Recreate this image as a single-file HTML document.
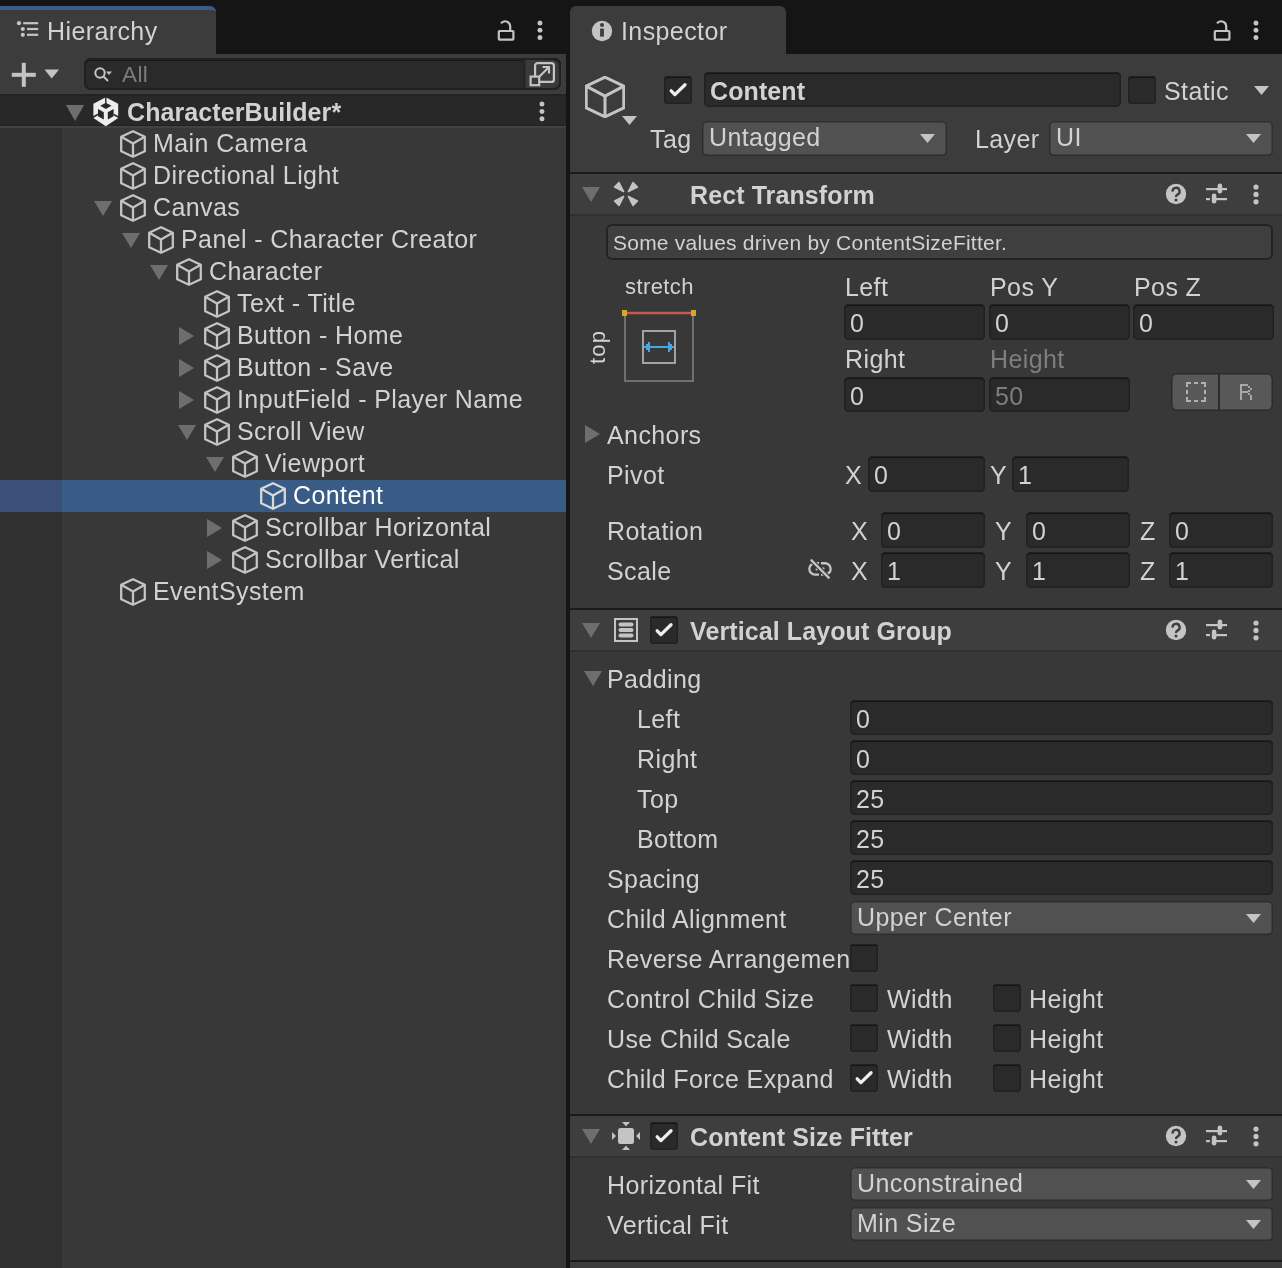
<!DOCTYPE html>
<html><head><meta charset="utf-8"><style>
html,body{margin:0;padding:0;width:1282px;height:1268px;overflow:hidden;background:#151515;}
.a{position:absolute;display:block;}
.t{position:absolute;white-space:nowrap;will-change:transform;font-family:"Liberation Sans",sans-serif;}
</style></head><body>
<div class="a" style="left:0px;top:0px;width:1282px;height:1268px;background:#151515;"></div>
<div class="a" style="left:0px;top:54px;width:566px;height:1214px;background:#383838;"></div>
<div class="a" style="left:0px;top:10px;width:216px;height:44px;background:#3c3c3c;border-top-right-radius:6px;"></div>
<div class="a" style="left:0px;top:6px;width:216px;height:6px;background:#3a5d87;border-top-right-radius:6px;"></div>
<div class="a" style="left:0px;top:10px;width:216px;height:44px;background:#3c3c3c;border-top-right-radius:4px;"></div>
<div class="a" style="left:0px;top:54px;width:566px;height:40px;background:#3c3c3c;"></div>
<div class="a" style="left:570px;top:54px;width:712px;height:1214px;background:#383838;"></div>
<div class="a" style="left:570px;top:6px;width:216px;height:48px;background:#3c3c3c;border-top-left-radius:6px;border-top-right-radius:6px;"></div>
<svg class="a" style="left:16px;top:20px;" width="24" height="20" viewBox="0 0 24 20"><g fill="#c4c4c4"><circle cx="3" cy="3.2" r="2.1"/><circle cx="6.8" cy="9" r="2.1"/><circle cx="6.8" cy="14.8" r="2.1"/><rect x="7.2" y="2.1" width="15" height="2.2"/><rect x="11" y="7.9" width="11.2" height="2.2"/><rect x="11" y="13.7" width="11.2" height="2.2"/></g></svg>
<div class="t" style="left:46.70px;top:19.14px;font-size:25px;line-height:25px;color:#d2d2d2;letter-spacing:0.4px;">Hierarchy</div>
<svg class="a" style="left:497px;top:19px;" width="18" height="22" viewBox="0 0 18 22"><g fill="none" stroke="#c4c4c4" stroke-width="2.2"><rect x="1.8" y="12" width="14.6" height="8.6" rx="0.8"/><path d="M4 4.4 A5.1 5.1 0 0 1 13.2 6.8 V12"/></g></svg>
<svg class="a" style="left:536px;top:18.7px;" width="8" height="22.6" viewBox="0 0 8 22.6"><circle cx="4" cy="4.0" r="2.5" fill="#c4c4c4"/><circle cx="4" cy="11.3" r="2.5" fill="#c4c4c4"/><circle cx="4" cy="18.6" r="2.5" fill="#c4c4c4"/></svg>
<svg class="a" style="left:1213px;top:19px;" width="18" height="22" viewBox="0 0 18 22"><g fill="none" stroke="#c4c4c4" stroke-width="2.2"><rect x="1.8" y="12" width="14.6" height="8.6" rx="0.8"/><path d="M4 4.4 A5.1 5.1 0 0 1 13.2 6.8 V12"/></g></svg>
<svg class="a" style="left:1252px;top:18.7px;" width="8" height="22.6" viewBox="0 0 8 22.6"><circle cx="4" cy="4.0" r="2.5" fill="#c4c4c4"/><circle cx="4" cy="11.3" r="2.5" fill="#c4c4c4"/><circle cx="4" cy="18.6" r="2.5" fill="#c4c4c4"/></svg>
<svg class="a" style="left:10px;top:62px;" width="26" height="26" viewBox="0 0 26 26"><g fill="#c4c4c4"><rect x="1.8" y="10.8" width="24" height="4"/><rect x="11.8" y="0.8" width="4" height="24"/></g></svg>
<svg class="a" style="left:44px;top:69px;" width="16" height="10" viewBox="0 0 16 10"><polygon points="0.5,0.5 15,0.5 7.7,9.5" fill="#c4c4c4"/></svg>
<div class="a" style="left:84px;top:58px;width:477px;height:32px;background:#2a2a2a;border-radius:7px;box-shadow:inset 0 0 0 2px #212121, inset 0 2.5px 0 0 #080808;box-sizing:border-box;"></div>
<div class="a" style="left:523px;top:60px;width:36px;height:28px;background:#3a3a3a;border-top-right-radius:6px;border-bottom-right-radius:6px;box-shadow:inset 2.5px 0 0 #262626;"></div>
<svg class="a" style="left:93px;top:66px;" width="24" height="18" viewBox="0 0 24 18"><g fill="none" stroke="#c4c4c4" stroke-width="2"><circle cx="7" cy="7" r="4.7"/><line x1="10.5" y1="10.5" x2="15" y2="15"/></g><polygon points="13,5.5 19,5.5 16,9" fill="#c4c4c4"/></svg>
<div class="t" style="left:121.70px;top:63.75px;font-size:22.5px;line-height:22.5px;color:#7c7c7c;letter-spacing:0.4px;">All</div>
<svg class="a" style="left:529px;top:61px;" width="32" height="28" viewBox="0 0 32 28"><g fill="none" stroke="#c4c4c4" stroke-width="2.2"><rect x="6.1" y="2.1" width="18.8" height="18.8" rx="2.5"/><path d="M9.5 16.5 L20 6 M13.5 6 H20 V12.5"/></g><rect x="1.6" y="15.6" width="8.6" height="8.6" fill="#3a3a3a" stroke="#c4c4c4" stroke-width="2.2"/></svg>
<div class="a" style="left:0px;top:94px;width:566px;height:2px;background:#232323;"></div>
<div class="a" style="left:0px;top:96px;width:566px;height:29px;background:#282828;"></div>
<div class="a" style="left:0px;top:125px;width:566px;height:1px;background:#232323;"></div>
<div class="a" style="left:0px;top:126px;width:566px;height:2px;background:#424242;"></div>
<svg class="a" style="left:66px;top:105px;" width="18" height="16" viewBox="0 0 18 16"><polygon points="0,0 18,0 9.0,16" fill="#6e6e6e"/></svg>
<svg class="a" style="left:90px;top:95px;" width="32" height="34" viewBox="0 0 32 34"><polygon points="15.8,2.3 28.2,8.7 28.2,23 15.8,31.3 3.4,23 3.4,8.7" fill="#eeeeee"/><g fill="#272727"><polygon points="15.1,1.5 16.5,1.5 16.5,8.4 15.1,8.4"/><polygon points="10.2,10.8 15.8,7.7 21.5,10.8 15.8,13.9"/><polygon points="8,13.9 13.8,17.2 13.8,24.6 8,21.2"/><polygon points="23.6,13.9 17.8,17.2 17.8,24.6 23.6,21.2"/><polygon points="2.5,21.6 8,18.5 8,20.3 2.5,23.4"/><polygon points="29.1,21.6 23.6,18.5 23.6,20.3 29.1,23.4"/></g></svg>
<div class="t" style="left:126.70px;top:99.64px;font-size:25px;line-height:25px;color:#d2d2d2;font-weight:bold;letter-spacing:0.1px;">CharacterBuilder*</div>
<svg class="a" style="left:538px;top:99.6px;" width="8" height="22.8" viewBox="0 0 8 22.8"><circle cx="4" cy="4.0" r="2.5" fill="#c4c4c4"/><circle cx="4" cy="11.4" r="2.5" fill="#c4c4c4"/><circle cx="4" cy="18.8" r="2.5" fill="#c4c4c4"/></svg>
<div class="a" style="left:0px;top:128px;width:62px;height:1140px;background:#303030;"></div>
<svg class="a" style="left:120px;top:130.4px;" width="26" height="28" viewBox="0 0 26 28"><g fill="none" stroke="#c4c4c4" stroke-width="2.3" stroke-linejoin="round"><polygon points="13.0,1.2 24.8,6.72 24.8,21.28 13.0,26.8 1.2,21.28 1.2,6.72"/><polyline points="1.2,6.72 13.0,13.44 24.8,6.72"/><line x1="13.0" y1="13.44" x2="13.0" y2="26.8"/></g></svg>
<div class="t" style="left:152.70px;top:131.04px;font-size:25px;line-height:25px;color:#d2d2d2;letter-spacing:0.4px;">Main Camera</div>
<svg class="a" style="left:120px;top:162.4px;" width="26" height="28" viewBox="0 0 26 28"><g fill="none" stroke="#c4c4c4" stroke-width="2.3" stroke-linejoin="round"><polygon points="13.0,1.2 24.8,6.72 24.8,21.28 13.0,26.8 1.2,21.28 1.2,6.72"/><polyline points="1.2,6.72 13.0,13.44 24.8,6.72"/><line x1="13.0" y1="13.44" x2="13.0" y2="26.8"/></g></svg>
<div class="t" style="left:152.70px;top:163.04px;font-size:25px;line-height:25px;color:#d2d2d2;letter-spacing:0.4px;">Directional Light</div>
<svg class="a" style="left:94px;top:201px;" width="18" height="15" viewBox="0 0 18 15"><polygon points="0,0 18,0 9.0,15" fill="#6e6e6e"/></svg>
<svg class="a" style="left:120px;top:194.4px;" width="26" height="28" viewBox="0 0 26 28"><g fill="none" stroke="#c4c4c4" stroke-width="2.3" stroke-linejoin="round"><polygon points="13.0,1.2 24.8,6.72 24.8,21.28 13.0,26.8 1.2,21.28 1.2,6.72"/><polyline points="1.2,6.72 13.0,13.44 24.8,6.72"/><line x1="13.0" y1="13.44" x2="13.0" y2="26.8"/></g></svg>
<div class="t" style="left:152.70px;top:195.04px;font-size:25px;line-height:25px;color:#d2d2d2;letter-spacing:0.4px;">Canvas</div>
<svg class="a" style="left:122px;top:233px;" width="18" height="15" viewBox="0 0 18 15"><polygon points="0,0 18,0 9.0,15" fill="#6e6e6e"/></svg>
<svg class="a" style="left:148px;top:226.4px;" width="26" height="28" viewBox="0 0 26 28"><g fill="none" stroke="#c4c4c4" stroke-width="2.3" stroke-linejoin="round"><polygon points="13.0,1.2 24.8,6.72 24.8,21.28 13.0,26.8 1.2,21.28 1.2,6.72"/><polyline points="1.2,6.72 13.0,13.44 24.8,6.72"/><line x1="13.0" y1="13.44" x2="13.0" y2="26.8"/></g></svg>
<div class="t" style="left:180.70px;top:227.04px;font-size:25px;line-height:25px;color:#d2d2d2;letter-spacing:0.4px;">Panel - Character Creator</div>
<svg class="a" style="left:150px;top:265px;" width="18" height="15" viewBox="0 0 18 15"><polygon points="0,0 18,0 9.0,15" fill="#6e6e6e"/></svg>
<svg class="a" style="left:176px;top:258.4px;" width="26" height="28" viewBox="0 0 26 28"><g fill="none" stroke="#c4c4c4" stroke-width="2.3" stroke-linejoin="round"><polygon points="13.0,1.2 24.8,6.72 24.8,21.28 13.0,26.8 1.2,21.28 1.2,6.72"/><polyline points="1.2,6.72 13.0,13.44 24.8,6.72"/><line x1="13.0" y1="13.44" x2="13.0" y2="26.8"/></g></svg>
<div class="t" style="left:208.70px;top:259.04px;font-size:25px;line-height:25px;color:#d2d2d2;letter-spacing:0.4px;">Character</div>
<svg class="a" style="left:204px;top:290.4px;" width="26" height="28" viewBox="0 0 26 28"><g fill="none" stroke="#c4c4c4" stroke-width="2.3" stroke-linejoin="round"><polygon points="13.0,1.2 24.8,6.72 24.8,21.28 13.0,26.8 1.2,21.28 1.2,6.72"/><polyline points="1.2,6.72 13.0,13.44 24.8,6.72"/><line x1="13.0" y1="13.44" x2="13.0" y2="26.8"/></g></svg>
<div class="t" style="left:236.70px;top:291.04px;font-size:25px;line-height:25px;color:#d2d2d2;letter-spacing:0.4px;">Text - Title</div>
<svg class="a" style="left:179px;top:327px;" width="15" height="18" viewBox="0 0 15 18"><polygon points="0,0 15,9.0 0,18" fill="#6e6e6e"/></svg>
<svg class="a" style="left:204px;top:322.4px;" width="26" height="28" viewBox="0 0 26 28"><g fill="none" stroke="#c4c4c4" stroke-width="2.3" stroke-linejoin="round"><polygon points="13.0,1.2 24.8,6.72 24.8,21.28 13.0,26.8 1.2,21.28 1.2,6.72"/><polyline points="1.2,6.72 13.0,13.44 24.8,6.72"/><line x1="13.0" y1="13.44" x2="13.0" y2="26.8"/></g></svg>
<div class="t" style="left:236.70px;top:323.04px;font-size:25px;line-height:25px;color:#d2d2d2;letter-spacing:0.4px;">Button - Home</div>
<svg class="a" style="left:179px;top:359px;" width="15" height="18" viewBox="0 0 15 18"><polygon points="0,0 15,9.0 0,18" fill="#6e6e6e"/></svg>
<svg class="a" style="left:204px;top:354.4px;" width="26" height="28" viewBox="0 0 26 28"><g fill="none" stroke="#c4c4c4" stroke-width="2.3" stroke-linejoin="round"><polygon points="13.0,1.2 24.8,6.72 24.8,21.28 13.0,26.8 1.2,21.28 1.2,6.72"/><polyline points="1.2,6.72 13.0,13.44 24.8,6.72"/><line x1="13.0" y1="13.44" x2="13.0" y2="26.8"/></g></svg>
<div class="t" style="left:236.70px;top:355.04px;font-size:25px;line-height:25px;color:#d2d2d2;letter-spacing:0.4px;">Button - Save</div>
<svg class="a" style="left:179px;top:391px;" width="15" height="18" viewBox="0 0 15 18"><polygon points="0,0 15,9.0 0,18" fill="#6e6e6e"/></svg>
<svg class="a" style="left:204px;top:386.4px;" width="26" height="28" viewBox="0 0 26 28"><g fill="none" stroke="#c4c4c4" stroke-width="2.3" stroke-linejoin="round"><polygon points="13.0,1.2 24.8,6.72 24.8,21.28 13.0,26.8 1.2,21.28 1.2,6.72"/><polyline points="1.2,6.72 13.0,13.44 24.8,6.72"/><line x1="13.0" y1="13.44" x2="13.0" y2="26.8"/></g></svg>
<div class="t" style="left:236.70px;top:387.04px;font-size:25px;line-height:25px;color:#d2d2d2;letter-spacing:0.4px;">InputField - Player Name</div>
<svg class="a" style="left:178px;top:425px;" width="18" height="15" viewBox="0 0 18 15"><polygon points="0,0 18,0 9.0,15" fill="#6e6e6e"/></svg>
<svg class="a" style="left:204px;top:418.4px;" width="26" height="28" viewBox="0 0 26 28"><g fill="none" stroke="#c4c4c4" stroke-width="2.3" stroke-linejoin="round"><polygon points="13.0,1.2 24.8,6.72 24.8,21.28 13.0,26.8 1.2,21.28 1.2,6.72"/><polyline points="1.2,6.72 13.0,13.44 24.8,6.72"/><line x1="13.0" y1="13.44" x2="13.0" y2="26.8"/></g></svg>
<div class="t" style="left:236.70px;top:419.04px;font-size:25px;line-height:25px;color:#d2d2d2;letter-spacing:0.4px;">Scroll View</div>
<svg class="a" style="left:206px;top:457px;" width="18" height="15" viewBox="0 0 18 15"><polygon points="0,0 18,0 9.0,15" fill="#6e6e6e"/></svg>
<svg class="a" style="left:232px;top:450.4px;" width="26" height="28" viewBox="0 0 26 28"><g fill="none" stroke="#c4c4c4" stroke-width="2.3" stroke-linejoin="round"><polygon points="13.0,1.2 24.8,6.72 24.8,21.28 13.0,26.8 1.2,21.28 1.2,6.72"/><polyline points="1.2,6.72 13.0,13.44 24.8,6.72"/><line x1="13.0" y1="13.44" x2="13.0" y2="26.8"/></g></svg>
<div class="t" style="left:264.70px;top:451.04px;font-size:25px;line-height:25px;color:#d2d2d2;letter-spacing:0.4px;">Viewport</div>
<div class="a" style="left:62px;top:480px;width:504px;height:32px;background:#385c85;"></div>
<div class="a" style="left:0px;top:480px;width:62px;height:32px;background:#3b4f79;"></div>
<svg class="a" style="left:260px;top:482.4px;" width="26" height="28" viewBox="0 0 26 28"><g fill="none" stroke="#d8d8d8" stroke-width="2.3" stroke-linejoin="round"><polygon points="13.0,1.2 24.8,6.72 24.8,21.28 13.0,26.8 1.2,21.28 1.2,6.72"/><polyline points="1.2,6.72 13.0,13.44 24.8,6.72"/><line x1="13.0" y1="13.44" x2="13.0" y2="26.8"/></g></svg>
<div class="t" style="left:292.70px;top:483.04px;font-size:25px;line-height:25px;color:#ffffff;letter-spacing:0.4px;">Content</div>
<svg class="a" style="left:207px;top:519px;" width="15" height="18" viewBox="0 0 15 18"><polygon points="0,0 15,9.0 0,18" fill="#6e6e6e"/></svg>
<svg class="a" style="left:232px;top:514.4px;" width="26" height="28" viewBox="0 0 26 28"><g fill="none" stroke="#c4c4c4" stroke-width="2.3" stroke-linejoin="round"><polygon points="13.0,1.2 24.8,6.72 24.8,21.28 13.0,26.8 1.2,21.28 1.2,6.72"/><polyline points="1.2,6.72 13.0,13.44 24.8,6.72"/><line x1="13.0" y1="13.44" x2="13.0" y2="26.8"/></g></svg>
<div class="t" style="left:264.70px;top:515.04px;font-size:25px;line-height:25px;color:#d2d2d2;letter-spacing:0.4px;">Scrollbar Horizontal</div>
<svg class="a" style="left:207px;top:551px;" width="15" height="18" viewBox="0 0 15 18"><polygon points="0,0 15,9.0 0,18" fill="#6e6e6e"/></svg>
<svg class="a" style="left:232px;top:546.4px;" width="26" height="28" viewBox="0 0 26 28"><g fill="none" stroke="#c4c4c4" stroke-width="2.3" stroke-linejoin="round"><polygon points="13.0,1.2 24.8,6.72 24.8,21.28 13.0,26.8 1.2,21.28 1.2,6.72"/><polyline points="1.2,6.72 13.0,13.44 24.8,6.72"/><line x1="13.0" y1="13.44" x2="13.0" y2="26.8"/></g></svg>
<div class="t" style="left:264.70px;top:547.04px;font-size:25px;line-height:25px;color:#d2d2d2;letter-spacing:0.4px;">Scrollbar Vertical</div>
<svg class="a" style="left:120px;top:578.4px;" width="26" height="28" viewBox="0 0 26 28"><g fill="none" stroke="#c4c4c4" stroke-width="2.3" stroke-linejoin="round"><polygon points="13.0,1.2 24.8,6.72 24.8,21.28 13.0,26.8 1.2,21.28 1.2,6.72"/><polyline points="1.2,6.72 13.0,13.44 24.8,6.72"/><line x1="13.0" y1="13.44" x2="13.0" y2="26.8"/></g></svg>
<div class="t" style="left:152.70px;top:579.04px;font-size:25px;line-height:25px;color:#d2d2d2;letter-spacing:0.4px;">EventSystem</div>
<svg class="a" style="left:591px;top:20px;" width="22" height="22" viewBox="0 0 22 22"><circle cx="11" cy="11" r="10.2" fill="#c4c4c4"/><circle cx="11" cy="5" r="2" fill="#3c3c3c"/><rect x="9.1" y="8.6" width="3.8" height="8" fill="#3c3c3c"/></svg>
<div class="t" style="left:620.70px;top:18.94px;font-size:25px;line-height:25px;color:#d2d2d2;letter-spacing:0.4px;">Inspector</div>
<div class="a" style="left:570px;top:54px;width:712px;height:118px;background:#3c3c3c;"></div>
<svg class="a" style="left:585px;top:76px;" width="40" height="42" viewBox="0 0 40 42"><g fill="none" stroke="#c4c4c4" stroke-width="3" stroke-linejoin="round"><polygon points="20.0,1.2 38.8,10.08 38.8,31.92 20.0,40.8 1.2,31.92 1.2,10.08"/><polyline points="1.2,10.08 20.0,20.16 38.8,10.08"/><line x1="20.0" y1="20.16" x2="20.0" y2="40.8"/></g></svg>
<svg class="a" style="left:622px;top:116px;" width="16" height="10" viewBox="0 0 16 10"><polygon points="0,0 15,0 7.5,9" fill="#c4c4c4"/></svg>
<div class="a" style="left:664px;top:76px;width:28px;height:28px;background:#2a2a2a;border-radius:4px;box-shadow:inset 0 0 0 1.5px #212121, inset 0 2px 0 0 #0a0a0a;box-sizing:border-box;"></div>
<svg class="a" style="left:664px;top:76px;" width="28" height="28" viewBox="0 0 28 28"><polyline points="7.2,14.8 10.9,18.6 21,8.7" fill="none" stroke="#eeeeee" stroke-width="3.3" stroke-linecap="round" stroke-linejoin="round"/></svg>
<div class="a" style="left:704px;top:72px;width:417px;height:35px;background:#2a2a2a;border-radius:5px;box-shadow:inset 0 0 0 1.5px #212121, inset 0 2px 0 0 #0a0a0a;box-sizing:border-box;"></div>
<div class="t" style="left:710.20px;top:78.64px;font-size:25px;line-height:25px;color:#d2d2d2;font-weight:bold;letter-spacing:0.1px;">Content</div>
<div class="a" style="left:1128px;top:76px;width:28px;height:28px;background:#2a2a2a;border-radius:4px;box-shadow:inset 0 0 0 1.5px #212121, inset 0 2px 0 0 #0a0a0a;box-sizing:border-box;"></div>
<div class="t" style="left:1163.70px;top:78.64px;font-size:25px;line-height:25px;color:#d2d2d2;letter-spacing:0.4px;">Static</div>
<svg class="a" style="left:1254px;top:86px;" width="16" height="10" viewBox="0 0 16 10"><polygon points="0,0 15,0 7.5,9" fill="#c4c4c4"/></svg>
<div class="t" style="left:649.70px;top:126.64px;font-size:25px;line-height:25px;color:#d2d2d2;letter-spacing:0.4px;">Tag</div>
<div class="a" style="left:702px;top:121px;width:245px;height:35px;background:#515151;border-radius:5px;box-shadow:inset 0 0 0 1.5px #2e2e2e, inset 0 -1px 0 0 #242424;box-sizing:border-box;"></div>
<div class="t" style="left:708.70px;top:124.64px;font-size:25px;line-height:25px;color:#d2d2d2;letter-spacing:0.4px;">Untagged</div>
<svg class="a" style="left:920px;top:134px;" width="15" height="9" viewBox="0 0 15 9"><polygon points="0,0 15,0 7.5,9" fill="#c4c4c4"/></svg>
<div class="t" style="left:974.70px;top:126.64px;font-size:25px;line-height:25px;color:#d2d2d2;letter-spacing:0.4px;">Layer</div>
<div class="a" style="left:1049px;top:121px;width:224px;height:35px;background:#515151;border-radius:5px;box-shadow:inset 0 0 0 1.5px #2e2e2e, inset 0 -1px 0 0 #242424;box-sizing:border-box;"></div>
<div class="t" style="left:1055.70px;top:124.64px;font-size:25px;line-height:25px;color:#d2d2d2;letter-spacing:0.4px;">UI</div>
<svg class="a" style="left:1246px;top:134px;" width="15" height="9" viewBox="0 0 15 9"><polygon points="0,0 15,0 7.5,9" fill="#c4c4c4"/></svg>
<div class="a" style="left:570px;top:172px;width:712px;height:2px;background:#1b1b1b;"></div>
<div class="a" style="left:570px;top:174px;width:712px;height:40px;background:#3e3e3e;"></div>
<div class="a" style="left:570px;top:214px;width:712px;height:2px;background:#303030;"></div>
<svg class="a" style="left:582px;top:187px;" width="18" height="15" viewBox="0 0 18 15"><polygon points="0,0 18,0 9.0,15" fill="#6e6e6e"/></svg>
<svg class="a" style="left:608px;top:176px;" width="36" height="36" viewBox="0 0 36 36"><g fill="#c4c4c4" stroke="#c4c4c4" stroke-width="1.6" stroke-linejoin="round"><polygon points="6.6,11 11,6.6 15.6,15.6"/><polygon points="29.4,11 25,6.6 20.4,15.6"/><polygon points="6.6,25 11,29.4 15.6,20.4"/><polygon points="29.4,25 25,29.4 20.4,20.4"/></g></svg>
<div class="t" style="left:689.70px;top:182.64px;font-size:25px;line-height:25px;color:#d2d2d2;font-weight:bold;letter-spacing:0.1px;">Rect Transform</div>
<svg class="a" style="left:1165px;top:183px;" width="22" height="22" viewBox="0 0 22 22"><circle cx="11" cy="11" r="10.2" fill="#c4c4c4"/><path d="M7.6 8.6 A3.5 3.5 0 1 1 12.4 11.6 C11.3 12.2 11 12.8 11 14" fill="none" stroke="#3e3e3e" stroke-width="2.4"/><circle cx="11" cy="17" r="1.5" fill="#3e3e3e"/></svg>
<svg class="a" style="left:1205px;top:182px;" width="22" height="22" viewBox="0 0 22 22"><g fill="#c4c4c4"><rect x="1" y="6" width="21" height="2.2"/><rect x="12.6" y="1.5" width="4.6" height="10" rx="2.3"/><rect x="1" y="16" width="4" height="2.2"/><rect x="9" y="16" width="13" height="2.2"/><rect x="6.8" y="11.5" width="4.6" height="10" rx="2.3"/></g></svg>
<svg class="a" style="left:1252px;top:182.6px;" width="8" height="22.8" viewBox="0 0 8 22.8"><circle cx="4" cy="4.0" r="2.6" fill="#c4c4c4"/><circle cx="4" cy="11.4" r="2.6" fill="#c4c4c4"/><circle cx="4" cy="18.8" r="2.6" fill="#c4c4c4"/></svg>
<div class="a" style="left:606px;top:224px;width:667px;height:36px;background:#3f3f3f;border-radius:6px;box-shadow:inset 0 0 0 2px #232323;box-sizing:border-box;"></div>
<div class="t" style="left:612.70px;top:232.02px;font-size:21px;line-height:21px;color:#d2d2d2;letter-spacing:0.22px;">Some values driven by ContentSizeFitter.</div>
<div class="t" style="left:624.70px;top:276.18px;font-size:22px;line-height:22px;color:#d2d2d2;letter-spacing:0.4px;">stretch</div>
<div class="t" style="left:0;top:0;font-size:22px;line-height:22px;letter-spacing:1.2px;color:#d2d2d2;transform-origin:0 0;transform:translate(587px,364px) rotate(-90deg);">top</div>
<svg class="a" style="left:620px;top:308px;" width="80" height="78" viewBox="0 0 80 78"><g fill="none"><rect x="5" y="5" width="68" height="68" stroke="#707070" stroke-width="2"/><rect x="23" y="23" width="32" height="32" stroke="#a2a2a2" stroke-width="2"/><line x1="5" y1="5" x2="73" y2="5" stroke="#c45a52" stroke-width="2.5"/></g><rect x="2" y="2" width="5" height="6" fill="#d6a72a"/><rect x="71" y="2" width="5" height="6" fill="#d6a72a"/><g fill="#4aa6e2"><rect x="24" y="38" width="30" height="2"/><rect x="26" y="36" width="2" height="6"/><rect x="28" y="34" width="2" height="10"/><rect x="48" y="34" width="2" height="10"/><rect x="50" y="36" width="2" height="6"/></g></svg>
<div class="t" style="left:844.70px;top:274.64px;font-size:25px;line-height:25px;color:#d2d2d2;letter-spacing:0.4px;">Left</div>
<div class="t" style="left:989.70px;top:274.64px;font-size:25px;line-height:25px;color:#d2d2d2;letter-spacing:0.4px;">Pos Y</div>
<div class="t" style="left:1133.70px;top:274.64px;font-size:25px;line-height:25px;color:#d2d2d2;letter-spacing:0.4px;">Pos Z</div>
<div class="a" style="left:844px;top:304px;width:141px;height:36px;background:#2a2a2a;border-radius:5px;box-shadow:inset 0 0 0 1.5px #212121, inset 0 2px 0 0 #0a0a0a;box-sizing:border-box;"></div>
<div class="t" style="left:849.70px;top:310.64px;font-size:25px;line-height:25px;color:#d2d2d2;letter-spacing:0.4px;">0</div>
<div class="a" style="left:989px;top:304px;width:141px;height:36px;background:#2a2a2a;border-radius:5px;box-shadow:inset 0 0 0 1.5px #212121, inset 0 2px 0 0 #0a0a0a;box-sizing:border-box;"></div>
<div class="t" style="left:994.70px;top:310.64px;font-size:25px;line-height:25px;color:#d2d2d2;letter-spacing:0.4px;">0</div>
<div class="a" style="left:1133px;top:304px;width:141px;height:36px;background:#2a2a2a;border-radius:5px;box-shadow:inset 0 0 0 1.5px #212121, inset 0 2px 0 0 #0a0a0a;box-sizing:border-box;"></div>
<div class="t" style="left:1138.70px;top:310.64px;font-size:25px;line-height:25px;color:#d2d2d2;letter-spacing:0.4px;">0</div>
<div class="t" style="left:844.70px;top:346.64px;font-size:25px;line-height:25px;color:#d2d2d2;letter-spacing:0.4px;">Right</div>
<div class="t" style="left:989.70px;top:346.64px;font-size:25px;line-height:25px;color:#7e7e7e;letter-spacing:0.4px;">Height</div>
<div class="a" style="left:844px;top:377px;width:141px;height:35px;background:#2a2a2a;border-radius:5px;box-shadow:inset 0 0 0 1.5px #212121, inset 0 2px 0 0 #0a0a0a;box-sizing:border-box;"></div>
<div class="t" style="left:849.70px;top:383.64px;font-size:25px;line-height:25px;color:#d2d2d2;letter-spacing:0.4px;">0</div>
<div class="a" style="left:989px;top:377px;width:141px;height:35px;background:#2a2a2a;border-radius:5px;box-shadow:inset 0 0 0 1.5px #212121, inset 0 2px 0 0 #0a0a0a;box-sizing:border-box;"></div>
<div class="t" style="left:994.70px;top:383.64px;font-size:25px;line-height:25px;color:#7e7e7e;letter-spacing:0.4px;">50</div>
<div class="a" style="left:1171px;top:373px;width:102px;height:38px;background:#585858;border-radius:6px;box-shadow:inset 0 0 0 1.5px #2b2b2b;box-sizing:border-box;"></div>
<div class="a" style="left:1218px;top:374px;width:2px;height:36px;background:#2b2b2b;"></div>
<svg class="a" style="left:1184px;top:380px;" width="24" height="24" viewBox="0 0 24 24"><g fill="#b0b0b0"><rect x="2" y="2" width="5" height="2"/><rect x="10" y="2" width="4" height="2"/><rect x="17" y="2" width="5" height="2"/><rect x="2" y="20" width="5" height="2"/><rect x="10" y="20" width="4" height="2"/><rect x="17" y="20" width="5" height="2"/><rect x="2" y="2" width="2" height="5"/><rect x="2" y="10" width="2" height="4"/><rect x="2" y="17" width="2" height="5"/><rect x="20" y="2" width="2" height="5"/><rect x="20" y="10" width="2" height="4"/><rect x="20" y="17" width="2" height="5"/></g></svg>
<svg class="a" style="left:1240px;top:384px;" width="12" height="16" viewBox="0 0 12 16"><g fill="#a8a8a8"><rect x="0" y="0" width="2" height="16"/><rect x="0" y="0" width="8" height="2"/><rect x="8" y="2" width="2" height="2"/><rect x="10" y="4" width="2" height="2"/><rect x="8" y="6" width="2" height="2"/><rect x="0" y="7" width="8" height="2"/><rect x="8" y="9" width="2" height="2"/><rect x="10" y="11" width="2" height="5"/></g></svg>
<svg class="a" style="left:585px;top:425px;" width="15" height="18" viewBox="0 0 15 18"><polygon points="0,0 15,9.0 0,18" fill="#6e6e6e"/></svg>
<div class="t" style="left:606.70px;top:422.64px;font-size:25px;line-height:25px;color:#d2d2d2;letter-spacing:0.4px;">Anchors</div>
<div class="t" style="left:606.70px;top:462.64px;font-size:25px;line-height:25px;color:#d2d2d2;letter-spacing:0.4px;">Pivot</div>
<div class="t" style="left:844.70px;top:462.64px;font-size:25px;line-height:25px;color:#d2d2d2;letter-spacing:0.4px;">X</div>
<div class="a" style="left:868px;top:456px;width:117px;height:36px;background:#2a2a2a;border-radius:5px;box-shadow:inset 0 0 0 1.5px #212121, inset 0 2px 0 0 #0a0a0a;box-sizing:border-box;"></div>
<div class="t" style="left:873.70px;top:462.64px;font-size:25px;line-height:25px;color:#d2d2d2;letter-spacing:0.4px;">0</div>
<div class="t" style="left:989.70px;top:462.64px;font-size:25px;line-height:25px;color:#d2d2d2;letter-spacing:0.4px;">Y</div>
<div class="a" style="left:1012px;top:456px;width:117px;height:36px;background:#2a2a2a;border-radius:5px;box-shadow:inset 0 0 0 1.5px #212121, inset 0 2px 0 0 #0a0a0a;box-sizing:border-box;"></div>
<div class="t" style="left:1017.70px;top:462.64px;font-size:25px;line-height:25px;color:#d2d2d2;letter-spacing:0.4px;">1</div>
<div class="t" style="left:606.70px;top:518.64px;font-size:25px;line-height:25px;color:#d2d2d2;letter-spacing:0.4px;">Rotation</div>
<div class="t" style="left:606.70px;top:558.64px;font-size:25px;line-height:25px;color:#d2d2d2;letter-spacing:0.4px;">Scale</div>
<svg class="a" style="left:802px;top:554px;" width="36" height="30" viewBox="0 0 36 30"><g fill="none" stroke="#c4c4c4" stroke-width="2.3"><path d="M17 9.25 H13 A5.65 5.65 0 0 0 13 20.55 H17"/><path d="M19 9.25 H23 A5.65 5.65 0 0 1 23 20.55 H19"/></g><g fill="#c4c4c4"><circle cx="14.8" cy="15.3" r="1.2"/><circle cx="21.3" cy="14.4" r="1.2"/></g><line x1="8.8" y1="5.6" x2="27.4" y2="24.4" stroke="#383838" stroke-width="4.6"/><line x1="8.8" y1="5.6" x2="27.4" y2="24.4" stroke="#c4c4c4" stroke-width="2.3"/></svg>
<div class="t" style="left:850.70px;top:518.64px;font-size:25px;line-height:25px;color:#d2d2d2;letter-spacing:0.4px;">X</div>
<div class="a" style="left:881px;top:512px;width:104px;height:36px;background:#2a2a2a;border-radius:5px;box-shadow:inset 0 0 0 1.5px #212121, inset 0 2px 0 0 #0a0a0a;box-sizing:border-box;"></div>
<div class="t" style="left:886.70px;top:518.64px;font-size:25px;line-height:25px;color:#d2d2d2;letter-spacing:0.4px;">0</div>
<div class="t" style="left:994.70px;top:518.64px;font-size:25px;line-height:25px;color:#d2d2d2;letter-spacing:0.4px;">Y</div>
<div class="a" style="left:1026px;top:512px;width:104px;height:36px;background:#2a2a2a;border-radius:5px;box-shadow:inset 0 0 0 1.5px #212121, inset 0 2px 0 0 #0a0a0a;box-sizing:border-box;"></div>
<div class="t" style="left:1031.70px;top:518.64px;font-size:25px;line-height:25px;color:#d2d2d2;letter-spacing:0.4px;">0</div>
<div class="t" style="left:1139.70px;top:518.64px;font-size:25px;line-height:25px;color:#d2d2d2;letter-spacing:0.4px;">Z</div>
<div class="a" style="left:1169px;top:512px;width:104px;height:36px;background:#2a2a2a;border-radius:5px;box-shadow:inset 0 0 0 1.5px #212121, inset 0 2px 0 0 #0a0a0a;box-sizing:border-box;"></div>
<div class="t" style="left:1174.70px;top:518.64px;font-size:25px;line-height:25px;color:#d2d2d2;letter-spacing:0.4px;">0</div>
<div class="t" style="left:850.70px;top:558.64px;font-size:25px;line-height:25px;color:#d2d2d2;letter-spacing:0.4px;">X</div>
<div class="a" style="left:881px;top:552px;width:104px;height:36px;background:#2a2a2a;border-radius:5px;box-shadow:inset 0 0 0 1.5px #212121, inset 0 2px 0 0 #0a0a0a;box-sizing:border-box;"></div>
<div class="t" style="left:886.70px;top:558.64px;font-size:25px;line-height:25px;color:#d2d2d2;letter-spacing:0.4px;">1</div>
<div class="t" style="left:994.70px;top:558.64px;font-size:25px;line-height:25px;color:#d2d2d2;letter-spacing:0.4px;">Y</div>
<div class="a" style="left:1026px;top:552px;width:104px;height:36px;background:#2a2a2a;border-radius:5px;box-shadow:inset 0 0 0 1.5px #212121, inset 0 2px 0 0 #0a0a0a;box-sizing:border-box;"></div>
<div class="t" style="left:1031.70px;top:558.64px;font-size:25px;line-height:25px;color:#d2d2d2;letter-spacing:0.4px;">1</div>
<div class="t" style="left:1139.70px;top:558.64px;font-size:25px;line-height:25px;color:#d2d2d2;letter-spacing:0.4px;">Z</div>
<div class="a" style="left:1169px;top:552px;width:104px;height:36px;background:#2a2a2a;border-radius:5px;box-shadow:inset 0 0 0 1.5px #212121, inset 0 2px 0 0 #0a0a0a;box-sizing:border-box;"></div>
<div class="t" style="left:1174.70px;top:558.64px;font-size:25px;line-height:25px;color:#d2d2d2;letter-spacing:0.4px;">1</div>
<div class="a" style="left:570px;top:608px;width:712px;height:2px;background:#1b1b1b;"></div>
<div class="a" style="left:570px;top:610px;width:712px;height:40px;background:#3e3e3e;"></div>
<div class="a" style="left:570px;top:650px;width:712px;height:2px;background:#303030;"></div>
<svg class="a" style="left:582px;top:623px;" width="18" height="15" viewBox="0 0 18 15"><polygon points="0,0 18,0 9.0,15" fill="#6e6e6e"/></svg>
<svg class="a" style="left:613px;top:617px;" width="26" height="26" viewBox="0 0 26 26"><rect x="2" y="2" width="22" height="22" fill="none" stroke="#c4c4c4" stroke-width="2"/><g fill="#c4c4c4"><rect x="5.5" y="5.5" width="15" height="4" rx="2"/><rect x="5.5" y="11" width="15" height="4" rx="2"/><rect x="5.5" y="16.5" width="15" height="4" rx="2"/></g></svg>
<div class="a" style="left:650px;top:616px;width:28px;height:28px;background:#2a2a2a;border-radius:4px;box-shadow:inset 0 0 0 1.5px #212121, inset 0 2px 0 0 #0a0a0a;box-sizing:border-box;"></div>
<svg class="a" style="left:650px;top:616px;" width="28" height="28" viewBox="0 0 28 28"><polyline points="7.2,14.8 10.9,18.6 21,8.7" fill="none" stroke="#eeeeee" stroke-width="3.3" stroke-linecap="round" stroke-linejoin="round"/></svg>
<div class="t" style="left:689.70px;top:618.64px;font-size:25px;line-height:25px;color:#d2d2d2;font-weight:bold;letter-spacing:0.1px;">Vertical Layout Group</div>
<svg class="a" style="left:1165px;top:619px;" width="22" height="22" viewBox="0 0 22 22"><circle cx="11" cy="11" r="10.2" fill="#c4c4c4"/><path d="M7.6 8.6 A3.5 3.5 0 1 1 12.4 11.6 C11.3 12.2 11 12.8 11 14" fill="none" stroke="#3e3e3e" stroke-width="2.4"/><circle cx="11" cy="17" r="1.5" fill="#3e3e3e"/></svg>
<svg class="a" style="left:1205px;top:618px;" width="22" height="22" viewBox="0 0 22 22"><g fill="#c4c4c4"><rect x="1" y="6" width="21" height="2.2"/><rect x="12.6" y="1.5" width="4.6" height="10" rx="2.3"/><rect x="1" y="16" width="4" height="2.2"/><rect x="9" y="16" width="13" height="2.2"/><rect x="6.8" y="11.5" width="4.6" height="10" rx="2.3"/></g></svg>
<svg class="a" style="left:1252px;top:618.6px;" width="8" height="22.8" viewBox="0 0 8 22.8"><circle cx="4" cy="4.0" r="2.6" fill="#c4c4c4"/><circle cx="4" cy="11.4" r="2.6" fill="#c4c4c4"/><circle cx="4" cy="18.8" r="2.6" fill="#c4c4c4"/></svg>
<svg class="a" style="left:584px;top:671px;" width="18" height="15" viewBox="0 0 18 15"><polygon points="0,0 18,0 9.0,15" fill="#6e6e6e"/></svg>
<div class="t" style="left:606.70px;top:666.64px;font-size:25px;line-height:25px;color:#d2d2d2;letter-spacing:0.4px;">Padding</div>
<div class="t" style="left:636.70px;top:706.64px;font-size:25px;line-height:25px;color:#d2d2d2;letter-spacing:0.4px;">Left</div>
<div class="a" style="left:850px;top:700px;width:423px;height:35px;background:#2a2a2a;border-radius:5px;box-shadow:inset 0 0 0 1.5px #212121, inset 0 2px 0 0 #0a0a0a;box-sizing:border-box;"></div>
<div class="t" style="left:855.70px;top:706.64px;font-size:25px;line-height:25px;color:#d2d2d2;letter-spacing:0.4px;">0</div>
<div class="t" style="left:636.70px;top:746.64px;font-size:25px;line-height:25px;color:#d2d2d2;letter-spacing:0.4px;">Right</div>
<div class="a" style="left:850px;top:740px;width:423px;height:35px;background:#2a2a2a;border-radius:5px;box-shadow:inset 0 0 0 1.5px #212121, inset 0 2px 0 0 #0a0a0a;box-sizing:border-box;"></div>
<div class="t" style="left:855.70px;top:746.64px;font-size:25px;line-height:25px;color:#d2d2d2;letter-spacing:0.4px;">0</div>
<div class="t" style="left:636.70px;top:786.64px;font-size:25px;line-height:25px;color:#d2d2d2;letter-spacing:0.4px;">Top</div>
<div class="a" style="left:850px;top:780px;width:423px;height:35px;background:#2a2a2a;border-radius:5px;box-shadow:inset 0 0 0 1.5px #212121, inset 0 2px 0 0 #0a0a0a;box-sizing:border-box;"></div>
<div class="t" style="left:855.70px;top:786.64px;font-size:25px;line-height:25px;color:#d2d2d2;letter-spacing:0.4px;">25</div>
<div class="t" style="left:636.70px;top:826.64px;font-size:25px;line-height:25px;color:#d2d2d2;letter-spacing:0.4px;">Bottom</div>
<div class="a" style="left:850px;top:820px;width:423px;height:35px;background:#2a2a2a;border-radius:5px;box-shadow:inset 0 0 0 1.5px #212121, inset 0 2px 0 0 #0a0a0a;box-sizing:border-box;"></div>
<div class="t" style="left:855.70px;top:826.64px;font-size:25px;line-height:25px;color:#d2d2d2;letter-spacing:0.4px;">25</div>
<div class="t" style="left:606.70px;top:866.64px;font-size:25px;line-height:25px;color:#d2d2d2;letter-spacing:0.4px;">Spacing</div>
<div class="a" style="left:850px;top:860px;width:423px;height:35px;background:#2a2a2a;border-radius:5px;box-shadow:inset 0 0 0 1.5px #212121, inset 0 2px 0 0 #0a0a0a;box-sizing:border-box;"></div>
<div class="t" style="left:855.70px;top:866.64px;font-size:25px;line-height:25px;color:#d2d2d2;letter-spacing:0.4px;">25</div>
<div class="t" style="left:606.70px;top:906.64px;font-size:25px;line-height:25px;color:#d2d2d2;letter-spacing:0.4px;">Child Alignment</div>
<div class="a" style="left:850px;top:901px;width:423px;height:34px;background:#515151;border-radius:5px;box-shadow:inset 0 0 0 1.5px #2e2e2e, inset 0 -1px 0 0 #242424;box-sizing:border-box;"></div>
<div class="t" style="left:856.70px;top:904.64px;font-size:25px;line-height:25px;color:#d2d2d2;letter-spacing:0.4px;">Upper Center</div>
<svg class="a" style="left:1246px;top:914px;" width="15" height="9" viewBox="0 0 15 9"><polygon points="0,0 15,0 7.5,9" fill="#c4c4c4"/></svg>
<div class="t" style="left:606.70px;top:946.64px;font-size:25px;line-height:25px;color:#d2d2d2;letter-spacing:0.4px;">Reverse Arrangemen</div>
<div class="a" style="left:850px;top:944px;width:28px;height:28px;background:#2a2a2a;border-radius:4px;box-shadow:inset 0 0 0 1.5px #212121, inset 0 2px 0 0 #0a0a0a;box-sizing:border-box;"></div>
<div class="t" style="left:606.70px;top:986.64px;font-size:25px;line-height:25px;color:#d2d2d2;letter-spacing:0.4px;">Control Child Size</div>
<div class="a" style="left:850px;top:984px;width:28px;height:28px;background:#2a2a2a;border-radius:4px;box-shadow:inset 0 0 0 1.5px #212121, inset 0 2px 0 0 #0a0a0a;box-sizing:border-box;"></div>
<div class="t" style="left:886.70px;top:986.64px;font-size:25px;line-height:25px;color:#d2d2d2;letter-spacing:0.4px;">Width</div>
<div class="a" style="left:993px;top:984px;width:28px;height:28px;background:#2a2a2a;border-radius:4px;box-shadow:inset 0 0 0 1.5px #212121, inset 0 2px 0 0 #0a0a0a;box-sizing:border-box;"></div>
<div class="t" style="left:1028.70px;top:986.64px;font-size:25px;line-height:25px;color:#d2d2d2;letter-spacing:0.4px;">Height</div>
<div class="t" style="left:606.70px;top:1026.64px;font-size:25px;line-height:25px;color:#d2d2d2;letter-spacing:0.4px;">Use Child Scale</div>
<div class="a" style="left:850px;top:1024px;width:28px;height:28px;background:#2a2a2a;border-radius:4px;box-shadow:inset 0 0 0 1.5px #212121, inset 0 2px 0 0 #0a0a0a;box-sizing:border-box;"></div>
<div class="t" style="left:886.70px;top:1026.64px;font-size:25px;line-height:25px;color:#d2d2d2;letter-spacing:0.4px;">Width</div>
<div class="a" style="left:993px;top:1024px;width:28px;height:28px;background:#2a2a2a;border-radius:4px;box-shadow:inset 0 0 0 1.5px #212121, inset 0 2px 0 0 #0a0a0a;box-sizing:border-box;"></div>
<div class="t" style="left:1028.70px;top:1026.64px;font-size:25px;line-height:25px;color:#d2d2d2;letter-spacing:0.4px;">Height</div>
<div class="t" style="left:606.70px;top:1066.64px;font-size:25px;line-height:25px;color:#d2d2d2;letter-spacing:0.4px;">Child Force Expand</div>
<div class="a" style="left:850px;top:1064px;width:28px;height:28px;background:#2a2a2a;border-radius:4px;box-shadow:inset 0 0 0 1.5px #212121, inset 0 2px 0 0 #0a0a0a;box-sizing:border-box;"></div>
<svg class="a" style="left:850px;top:1064px;" width="28" height="28" viewBox="0 0 28 28"><polyline points="7.2,14.8 10.9,18.6 21,8.7" fill="none" stroke="#eeeeee" stroke-width="3.3" stroke-linecap="round" stroke-linejoin="round"/></svg>
<div class="t" style="left:886.70px;top:1066.64px;font-size:25px;line-height:25px;color:#d2d2d2;letter-spacing:0.4px;">Width</div>
<div class="a" style="left:993px;top:1064px;width:28px;height:28px;background:#2a2a2a;border-radius:4px;box-shadow:inset 0 0 0 1.5px #212121, inset 0 2px 0 0 #0a0a0a;box-sizing:border-box;"></div>
<div class="t" style="left:1028.70px;top:1066.64px;font-size:25px;line-height:25px;color:#d2d2d2;letter-spacing:0.4px;">Height</div>
<div class="a" style="left:570px;top:1114px;width:712px;height:2px;background:#1b1b1b;"></div>
<div class="a" style="left:570px;top:1116px;width:712px;height:40px;background:#3e3e3e;"></div>
<div class="a" style="left:570px;top:1156px;width:712px;height:2px;background:#303030;"></div>
<svg class="a" style="left:582px;top:1129px;" width="18" height="15" viewBox="0 0 18 15"><polygon points="0,0 18,0 9.0,15" fill="#6e6e6e"/></svg>
<svg class="a" style="left:611px;top:1122px;" width="30" height="30" viewBox="0 0 30 30"><g fill="#c4c4c4"><rect x="7" y="6" width="16" height="16" rx="2.5"/><polygon points="11,0 19,0 15,4.3"/><polygon points="11,28 19,28 15,23.7"/><polygon points="1,10 1,18 5,14"/><polygon points="29,10 29,18 25,14"/></g></svg>
<div class="a" style="left:650px;top:1122px;width:28px;height:28px;background:#2a2a2a;border-radius:4px;box-shadow:inset 0 0 0 1.5px #212121, inset 0 2px 0 0 #0a0a0a;box-sizing:border-box;"></div>
<svg class="a" style="left:650px;top:1122px;" width="28" height="28" viewBox="0 0 28 28"><polyline points="7.2,14.8 10.9,18.6 21,8.7" fill="none" stroke="#eeeeee" stroke-width="3.3" stroke-linecap="round" stroke-linejoin="round"/></svg>
<div class="t" style="left:689.70px;top:1124.64px;font-size:25px;line-height:25px;color:#d2d2d2;font-weight:bold;letter-spacing:0.1px;">Content Size Fitter</div>
<svg class="a" style="left:1165px;top:1125px;" width="22" height="22" viewBox="0 0 22 22"><circle cx="11" cy="11" r="10.2" fill="#c4c4c4"/><path d="M7.6 8.6 A3.5 3.5 0 1 1 12.4 11.6 C11.3 12.2 11 12.8 11 14" fill="none" stroke="#3e3e3e" stroke-width="2.4"/><circle cx="11" cy="17" r="1.5" fill="#3e3e3e"/></svg>
<svg class="a" style="left:1205px;top:1124px;" width="22" height="22" viewBox="0 0 22 22"><g fill="#c4c4c4"><rect x="1" y="6" width="21" height="2.2"/><rect x="12.6" y="1.5" width="4.6" height="10" rx="2.3"/><rect x="1" y="16" width="4" height="2.2"/><rect x="9" y="16" width="13" height="2.2"/><rect x="6.8" y="11.5" width="4.6" height="10" rx="2.3"/></g></svg>
<svg class="a" style="left:1252px;top:1124.6px;" width="8" height="22.8" viewBox="0 0 8 22.8"><circle cx="4" cy="4.0" r="2.6" fill="#c4c4c4"/><circle cx="4" cy="11.4" r="2.6" fill="#c4c4c4"/><circle cx="4" cy="18.8" r="2.6" fill="#c4c4c4"/></svg>
<div class="t" style="left:606.70px;top:1172.64px;font-size:25px;line-height:25px;color:#d2d2d2;letter-spacing:0.4px;">Horizontal Fit</div>
<div class="a" style="left:850px;top:1167px;width:423px;height:34px;background:#515151;border-radius:5px;box-shadow:inset 0 0 0 1.5px #2e2e2e, inset 0 -1px 0 0 #242424;box-sizing:border-box;"></div>
<div class="t" style="left:856.70px;top:1170.64px;font-size:25px;line-height:25px;color:#d2d2d2;letter-spacing:0.4px;">Unconstrained</div>
<svg class="a" style="left:1246px;top:1180px;" width="15" height="9" viewBox="0 0 15 9"><polygon points="0,0 15,0 7.5,9" fill="#c4c4c4"/></svg>
<div class="t" style="left:606.70px;top:1212.64px;font-size:25px;line-height:25px;color:#d2d2d2;letter-spacing:0.4px;">Vertical Fit</div>
<div class="a" style="left:850px;top:1207px;width:423px;height:34px;background:#515151;border-radius:5px;box-shadow:inset 0 0 0 1.5px #2e2e2e, inset 0 -1px 0 0 #242424;box-sizing:border-box;"></div>
<div class="t" style="left:856.70px;top:1210.64px;font-size:25px;line-height:25px;color:#d2d2d2;letter-spacing:0.4px;">Min Size</div>
<svg class="a" style="left:1246px;top:1220px;" width="15" height="9" viewBox="0 0 15 9"><polygon points="0,0 15,0 7.5,9" fill="#c4c4c4"/></svg>
<div class="a" style="left:570px;top:1260px;width:712px;height:2px;background:#1b1b1b;"></div>
<div class="a" style="left:570px;top:1262px;width:712px;height:6px;background:#3c3c3c;"></div>
</body></html>
